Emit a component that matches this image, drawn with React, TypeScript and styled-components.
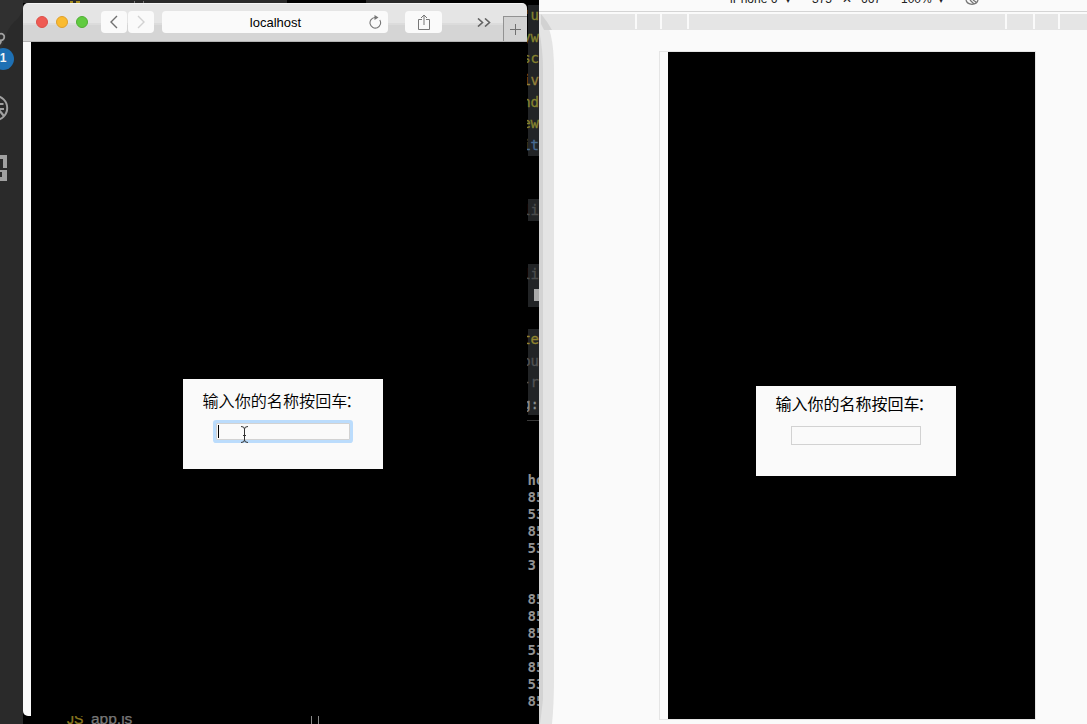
import React from 'react';
import styled, { createGlobalStyle } from 'styled-components';

const GlobalStyle = createGlobalStyle`
  * { box-sizing: border-box; }
  body { margin: 0; background: #000; overflow: hidden; }
`;

const Desktop = styled.main`
  display: flex;
  width: 1087px;
  height: 724px;
  overflow: hidden;
  background: #000;
  font-family: "Liberation Sans", "Noto Sans CJK SC", sans-serif;
`;

const ActivityBar = styled.aside`
  position: relative;
  width: 23px;
  height: 724px;
  background: #2a2a2a;
  overflow: hidden;
  svg { display: block; }
`;

const Badge = styled.span`
  position: absolute;
  left: -8px;
  top: 48px;
  width: 22px;
  height: 22px;
  border-radius: 50%;
  background: #1e70b4;
  color: #f4f4f4;
  font: bold 12px/21px "Liberation Sans", sans-serif;
  text-align: center;
`;

const Middle = styled.div`
  display: flex;
  flex-direction: column;
  width: 516px;
`;

const TabStrip = styled.div`
  display: flex;
  height: 3px;
  padding-right: 109px;
  justify-content: space-between;
  overflow: hidden;
`;

const TabPiece = styled.div<{ $width: number }>`
  width: ${p => p.$width}px;
  height: 3px;
  background: #292929;
  svg { display: block; }
`;

const Workspace = styled.div`
  display: flex;
  height: 713px;
`;

const BrowserWindow = styled.section`
  display: flex;
  flex-direction: column;
  width: 504px;
  border-radius: 5px 5px 0 5px;
  overflow: hidden;
`;

const TitleBar = styled.header`
  display: flex;
  align-items: center;
  height: 39px;
  padding-left: 13px;
  background: linear-gradient(#f4f4f4 0 1px, #e5e5e5 1px 20px, #dcdcdc 20px 22px, #d5d5d5 22px);
  border-bottom: 1px solid #b3b3b3;
`;

const Lights = styled.div`
  display: flex;
  gap: 8px;
  margin-right: 13px;
`;

const Light = styled.i<{ $fill: string; $edge: string }>`
  width: 12px;
  height: 12px;
  border-radius: 50%;
  background: ${p => p.$fill};
  border: 1px solid ${p => p.$edge};
`;

const ToolButton = styled.button<{ $width: number; $after: number }>`
  display: flex;
  align-items: center;
  justify-content: center;
  width: ${p => p.$width}px;
  height: 22px;
  margin: 0 ${p => p.$after}px 0 0;
  padding: 0;
  border: 0;
  border-radius: 4px;
  background: #fafafa;
  flex: none;
`;

const Address = styled.div`
  display: grid;
  grid-template-columns: 1fr auto 1fr;
  align-items: center;
  width: 226px;
  height: 22px;
  margin-right: 17px;
  padding: 0 6px 0 7px;
  border-radius: 4px;
  background: #fafafa;
  color: #000;
  font-size: 13px;
  span { grid-column: 2; }
  svg { justify-self: end; margin-bottom: 1px; }
`;

const NewTab = styled.div`
  display: flex;
  align-items: center;
  justify-content: center;
  align-self: flex-end;
  width: 24px;
  height: 25px;
  margin-left: 12px;
  border-left: 1px solid #929292;
  border-top: 1px solid #929292;
  background: #d3d3d3;
`;

const Page = styled.div`
  display: flex;
  flex: 1;
  padding: 337px 0 0 152px;
  border-left: 8px solid #fafafa;
  background: #000;
`;

const Card = styled.form<{ $top: number }>`
  position: relative;
  display: flex;
  flex-direction: column;
  align-items: center;
  width: 200px;
  height: 90px;
  padding-top: ${p => p.$top}px;
  background: #fafafa;
`;

const Label = styled.label<{ $light?: boolean }>`
  width: 161px;
  font-family: "Noto Sans CJK SC", sans-serif;
  font-size: ${p => (p.$light ? 16.1 : 16)}px;
  font-weight: ${p => (p.$light ? 350 : 400)};
  line-height: 24px;
  color: #000;
  white-space: nowrap;
  span { margin-left: -2px; }
`;

const Field = styled.div<{ $focused?: boolean }>`
  display: flex;
  align-items: center;
  width: ${p => (p.$focused ? 134 : 130)}px;
  height: ${p => (p.$focused ? 17 : 19)}px;
  margin-top: 11px;
  padding-left: ${p => (p.$focused ? 1 : 0)}px;
  border: 1px solid #d2d2d2;
  background: #fafafa;
  box-shadow: ${p => (p.$focused ? '0 0 0 3px #bbdcfc' : 'none')};
  border-radius: ${p => (p.$focused ? 1 : 0)}px;
`;

const Caret = styled.i`
  width: 1px;
  height: 13px;
  background: #000;
`;

const Pointer = styled.svg`
  position: absolute;
  left: 57px;
  top: 47px;
`;

const Sliver = styled.div`
  display: flex;
  flex-direction: column;
  width: 12px;
  padding-top: 2px;
  overflow: hidden;
`;

const CodeLines = styled.div`
  height: 416px;
  border-bottom: 1px solid #3a3a3a;
`;

const CodeLine = styled.div<{ $color: string; $lit: boolean }>`
  display: flex;
  align-items: center;
  justify-content: flex-end;
  height: 21.6px;
  margin-left: 1px;
  background: ${p => (p.$lit ? '#222426' : 'transparent')};
  color: ${p => p.$color};
  font: 14px/21px "DejaVu Sans Mono", monospace;
  -webkit-text-stroke: 0.3px currentColor;
  white-space: pre;
`;

const Cursor = styled.i`
  width: 5px;
  height: 12px;
  margin-bottom: 3px;
  background: #a9a9a9;
`;

const Terminal = styled.div`
  margin-top: 51px;
  padding-left: 0.5px;
  color: #929292;
  font: bold 14px/17px "DejaVu Sans Mono", monospace;
  white-space: pre;
`;

const FileStrip = styled.footer`
  display: flex;
  height: 8px;
  padding-left: 44px;
  overflow: hidden;
  color: #777;
  font-size: 15.5px;
  line-height: 6px;
  b { width: 24px; color: #8c7b20; font-weight: 400; font-size: 14px; -webkit-text-stroke: 0.3px currentColor; }
  span { width: 220px; -webkit-text-stroke: 0.3px currentColor; }
`;

const Rule = styled.i`
  width: 1px;
  height: 8px;
  margin-right: 6px;
  background: #888;
`;

const DevTools = styled.section`
  position: relative;
  width: 548px;
  height: 724px;
  background: #fafafa;
`;

const DeviceBar = styled.div`
  display: flex;
  height: 12px;
  padding-left: 191px;
  overflow: hidden;
  border-bottom: 1px solid #d4d4d4;
  color: #222;
  font-size: 12px;
  line-height: 14px;
`;

const DeviceItem = styled.span<{ $width: number }>`
  flex: none;
  width: ${p => p.$width}px;
  height: 14px;
  margin-top: -8px;
  white-space: nowrap;
`;

const Ruler = styled.div`
  display: flex;
  gap: 2px;
  height: 16px;
  margin: 2px 0 21px 2px;
  border-bottom: 1px solid #e5e5e5;
`;

const RulerPart = styled.i<{ $width: number }>`
  flex: none;
  width: ${p => p.$width}px;
  background: #e5e5e5;
`;

const Device = styled.div`
  width: 377px;
  height: 669px;
  margin-left: 120px;
  border: 1px solid #e5e5e5;
  padding-left: 8px;
`;

const DeviceScreen = styled.div`
  height: 667px;
  padding: 334px 0 0 88px;
  background: #000;
`;

const EdgeShade = styled.svg`
  position: absolute;
  left: 0;
  top: 14px;
`;

const CODE: [string, string][] = [
  ["'u", '#85822f'], ['yw', '#85822f'], ['sc', '#85822f'], ['iv', '#94803a'],
  ['nd', '#85822f'], ['ew', '#85822f'], ['it', '#486a91'], ['', ''], ['', ''],
  ['li', '#4b4c4d'], ['', ''], ['', ''], ['li', '#4b4c4d'], ['|', ''], ['', ''],
  ['te', '#92852f'], ['ou', '#525354'], ['-r', '#525354'], ['g:', '#8d8d8d'],
];

const SHELL = ['ho', '85', '53', '85', '53', '3', '', '85', '85', '85', '53', '85', '53', '85'];
const RULER = [94, 23, 25, 316, 26, 23, 27];

const Chevron = ({ d, color }: { d: string; color: string }) => (
  <svg width="8" height="14" viewBox="0 0 8 14" fill="none" stroke={color} strokeWidth="1.4"><path d={d} /></svg>
);

export default function App() {
  return (
    <>
      <GlobalStyle />
      <Desktop>
        <ActivityBar>
          <svg width="23" height="724" fill="none" stroke="#a0a0a0">
            <path d="M0 0H23V8Q21 17 14 22Q8 28 5 38L0 55Z" fill="#303030" stroke="none" />
            <circle cx="1" cy="37" r="3.3" strokeWidth="1.8" />
            <path d="M1 40Q1 44-2 45" strokeWidth="2" />
            <circle cx="-5" cy="108" r="12.2" strokeWidth="2" />
            <path d="M0 104H3.500M-1 109H4M-1 110L4 116" strokeWidth="2.200" />
            <path d="M0 155H7V168H3V159H0ZM0 170H7V181H0V177H2V172H0Z" fill="#a0a0a0" stroke="none" />
          </svg>
          <Badge>1</Badge>
        </ActivityBar>
        <Middle>
          <TabStrip>
            <TabPiece $width={264}>
              <svg width="264" height="3">
                <path d="M47 2H50M53 2H57" stroke="#a48b1e" strokeWidth="2" />
                <path d="M111.500 1V3M120.500 1V3" stroke="#777" />
              </svg>
            </TabPiece>
            <TabPiece $width={64} />
          </TabStrip>
          <Workspace>
            <BrowserWindow>
              <TitleBar>
                <Lights>
                  <Light $fill="#ef5b54" $edge="#dc5049" />
                  <Light $fill="#fabb30" $edge="#dfa02b" />
                  <Light $fill="#61cb40" $edge="#50ae34" />
                </Lights>
                <ToolButton $width={26} $after={1}><Chevron d="M7 1L1 7L7 13" color="#707070" /></ToolButton>
                <ToolButton $width={26} $after={8}><Chevron d="M1 1L7 7L1 13" color="#d2d2d2" /></ToolButton>
                <Address>
                  <span>localhost</span>
                  <svg width="14" height="14" viewBox="0 0 14 14" fill="none" stroke="#777" strokeWidth="1.1">
                    <path d="M11.800 5A5.300 5.300 0 1 1 7 2.500H9" />
                    <path d="M6.500 0L10.500 2.600L6.500 5Z" fill="#777" stroke="none" />
                  </svg>
                </Address>
                <ToolButton $width={37} $after={35}>
                  <svg width="12" height="16" viewBox="0 0 12 16" fill="none" stroke="#777">
                    <path d="M4 5.500H.500V15.500H11.500V5.500H8M6 11V1M3 4L6 1L9 4" />
                  </svg>
                </ToolButton>
                <svg width="14" height="9" viewBox="0 0 14 9" fill="none" stroke="#636363" strokeWidth="1.6">
                  <path d="M1 .500L5.500 4.500L1 8.500M8 .500L12.500 4.500L8 8.500" />
                </svg>
                <NewTab>
                  <svg width="11" height="11" fill="none" stroke="#707070"><path d="M0 5.500H11M5.500 0V11" /></svg>
                </NewTab>
              </TitleBar>
              <Page>
                <Card $top={9}>
                  <Label $light>输入你的名称按回车<span>：</span></Label>
                  <Field $focused><Caret /></Field>
                  <Pointer width="9" height="17" viewBox="0 0 9 17" fill="none" stroke="#333">
                    <path d="M1 .500Q4.500 .500 4.500 3V14Q4.500 16.500 1 16.500M8 .500Q4.500 .500 4.500 3M8 16.500Q4.500 16.500 4.500 14M3 9.500H6" />
                  </Pointer>
                </Card>
              </Page>
            </BrowserWindow>
            <Sliver>
              <CodeLines>
                {CODE.map(([text, color], i) => (
                  <CodeLine key={i} $color={color} $lit={text !== '' || i === 13}>
                    {text === '|' ? <Cursor /> : text}
                  </CodeLine>
                ))}
              </CodeLines>
              <Terminal>{SHELL.map(line => line + '\n').join('')}</Terminal>
            </Sliver>
          </Workspace>
          <FileStrip><b>JS</b><span>app.js</span><Rule /><Rule /></FileStrip>
        </Middle>
        <DevTools>
          <DeviceBar>
            <DeviceItem $width={55}>iPhone 6</DeviceItem>
            <DeviceItem $width={27}>▾</DeviceItem>
            <DeviceItem $width={30}>375</DeviceItem>
            <DeviceItem $width={19}>✕</DeviceItem>
            <DeviceItem $width={40}>667</DeviceItem>
            <DeviceItem $width={37}>100%</DeviceItem>
            <DeviceItem $width={27}>▾</DeviceItem>
            <svg width="14" height="6" viewBox="0 0 14 6" fill="none" stroke="#777" strokeWidth="1.3">
              <path d="M1 0Q2 4 7 4.300Q12 4 13 0M5 0L9 4M8 0L11 2" />
            </svg>
          </DeviceBar>
          <Ruler>{RULER.map((width, i) => <RulerPart key={i} $width={width} />)}</Ruler>
          <Device>
            <DeviceScreen>
              <Card $top={5}>
                <Label>输入你的名称按回车<span>：</span></Label>
                <Field />
              </Card>
            </DeviceScreen>
          </Device>
          <EdgeShade width="16" height="710">
            <path d="M2 0Q15 14 15 55V665Q15 690 13 710H0V0Z" fill="#e4e4e4" />
            <path d="M2 0Q8 7 13 16H5L2 10V0Z" fill="#d2d2d2" />
            <path d="M0 16Q4 35 4 55V685Q3 695 1 710H0Z" fill="#d3d3d3" />
          </EdgeShade>
        </DevTools>
      </Desktop>
    </>
  );
}
